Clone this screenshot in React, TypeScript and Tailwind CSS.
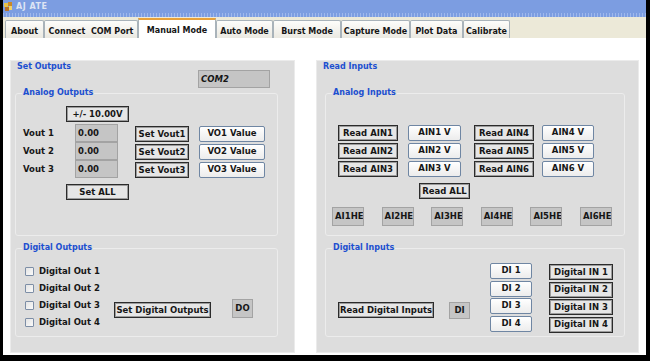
import type { ReactNode } from "react";

const tabs = [
  { label: "About", w: "w-[39px]" },
  { label: "Connect  COM Port", w: "w-[94px]" },
  { label: "Manual Mode", w: "w-[78px]", active: true },
  { label: "Auto Mode", w: "w-[57px]" },
  { label: "Burst Mode", w: "w-[68px]" },
  { label: "Capture Mode", w: "w-[69px]" },
  { label: "Plot Data", w: "w-[53px]" },
  { label: "Calibrate", w: "w-[47px]" },
];

function FlatBtn({ children, className = "" }: { children: ReactNode; className?: string }) {
  return (
    <div
      className={`h-[16px] flex items-center justify-center whitespace-pre border border-[#2b2b2b] bg-[#e6e6e6] shadow-[inset_0_0_0_1px_#9c9c9c] ${className}`}
    >
      {children}
    </div>
  );
}

function RoundBtn({ children, className = "" }: { children: ReactNode; className?: string }) {
  return (
    <div
      className={`h-[16px] flex items-end justify-center pb-[1px] whitespace-pre rounded-[2px] border border-[#6f86a3] bg-gradient-to-b from-[#ffffff] to-[#ececec] ${className}`}
    >
      {children}
    </div>
  );
}

function Field({ children, className = "" }: { children: ReactNode; className?: string }) {
  return (
    <div
      className={`flex items-center overflow-hidden whitespace-pre bg-[#c5c5c5] border border-[#a3a3a3] ${className}`}
    >
      {children}
    </div>
  );
}

function Group({
  title,
  className = "",
  children,
}: {
  title: string;
  className?: string;
  children: ReactNode;
}) {
  return (
    <fieldset className={`border border-[#ececec] rounded-[3px] ${className}`}>
      <legend className="ml-[6px] px-[1px] leading-[10px] text-[8px] text-[#1c4fd0]">{title}</legend>
      {children}
    </fieldset>
  );
}

export default function App() {
  return (
    <div className="w-[650px] h-[361px] bg-black pl-[3px] pr-[4px] pb-[6px] font-['DejaVu_Sans',sans-serif] font-bold text-[8.5px] text-[#161616]">
      <div className="h-full flex flex-col bg-white">
        {/* title bar */}
        <div className="h-[17px] flex flex-col bg-[#7c9de1]">
          <div className="h-[13px] flex items-center pl-[1px] gap-[3px]">
            <svg width="9" height="9" viewBox="0 0 9 9">
              <rect x="0" y="1" width="4" height="4" fill="#e8c34a" />
              <rect x="4" y="0" width="4" height="4" fill="#c98a2a" />
              <rect x="1" y="5" width="4" height="4" fill="#b7722a" />
              <rect x="5" y="4" width="3" height="4" fill="#f0d36a" />
            </svg>
            <span className="text-[8px] text-[#dde4f4] leading-none tracking-[0.5px]">AJ ATE</span>
          </div>
          <div className="h-[4px] bg-[repeating-linear-gradient(90deg,#9fb8ec_0px,#9fb8ec_1px,#7c9de1_1px,#7c9de1_3px)]" />
        </div>

        {/* tab strip */}
        <div className="h-[21px] flex items-end pl-[2px] bg-[#ece9d8]">
          {tabs.map((t) =>
            t.active ? (
              <div
                key={t.label}
                className={`${t.w} h-[20px] flex justify-center pt-[5px] whitespace-pre text-[8px] bg-white border-t-2 border-[#e7a13a] border-x border-x-[#a9b3ba]`}
              >
                {t.label}
              </div>
            ) : (
              <div
                key={t.label}
                className={`${t.w} h-[18px] flex justify-center pt-[5px] whitespace-pre text-[8px] bg-gradient-to-b from-[#fdfdfb] to-[#ebe9e1] border border-b-0 border-[#a9b3ba] rounded-t-[2px]`}
              >
                {t.label}
              </div>
            )
          )}
        </div>

        {/* content */}
        <div className="flex-1 flex pt-[22px] pl-[7px] gap-[21px]">
          {/* Set Outputs */}
          <div className="w-[285px] h-[293px] flex flex-col bg-[#dddddd] border border-[#ebebeb]">
            <div className="h-[27px] flex justify-between pl-[6px] pr-[24px]">
              <span className="mt-[1px] leading-[10px] text-[8px] text-[#1c4fd0]">Set Outputs</span>
              <Field className="mt-[9px] w-[72px] h-[18px] pl-[2px] italic">COM2</Field>
            </div>

            <Group title="Analog Outputs" className="ml-[4px] w-[263px] h-[148px]">
              <div className="flex flex-col">
                <FlatBtn className="ml-[50px] mt-[8px] w-[63px]">+/- 10.00V</FlatBtn>
                <div className="mt-[2px] flex items-start">
                  <div className="ml-[7px] w-[52px] flex flex-col">
                    {["Vout 1", "Vout 2", "Vout 3"].map((v) => (
                      <div key={v} className="h-[18px] flex items-center whitespace-pre">
                        {v}
                      </div>
                    ))}
                  </div>
                  <div className="w-[43px] flex flex-col">
                    {[0, 1, 2].map((i) => (
                      <Field key={i} className="h-[18px] pl-[2px]">
                        0.00
                      </Field>
                    ))}
                  </div>
                  <div className="ml-[17px] mt-[2px] flex flex-col gap-[2px]">
                    {[1, 2, 3].map((i) => (
                      <FlatBtn key={i} className="w-[54px]">{`Set Vout${i}`}</FlatBtn>
                    ))}
                  </div>
                  <div className="ml-[10px] mt-[2px] flex flex-col gap-[2px]">
                    {[1, 2, 3].map((i) => (
                      <RoundBtn key={i} className="w-[66px]">{`VO${i} Value`}</RoundBtn>
                    ))}
                  </div>
                </div>
                <FlatBtn className="ml-[50px] mt-[6px] w-[63px]">Set ALL</FlatBtn>
              </div>
            </Group>

            <Group title="Digital Outputs" className="mt-[7px] ml-[4px] w-[263px] h-[94px]">
              <div className="flex items-start">
                <div className="ml-[9px] mt-[10px] w-[89px] flex flex-col">
                  {[1, 2, 3, 4].map((i) => (
                    <div key={i} className="h-[17px] flex items-center gap-[5px] whitespace-pre">
                      <span className="w-[9px] h-[9px] rounded-[1px] border border-[#7d8ea6] bg-gradient-to-br from-[#e4e4e4] to-[#fafafa]" />
                      {`Digital Out ${i}`}
                    </div>
                  ))}
                </div>
                <FlatBtn className="mt-[49px] w-[97px]">Set Digital Outputs</FlatBtn>
                <Field className="ml-[21px] mt-[46px] w-[21px] h-[19px] justify-center">DO</Field>
              </div>
            </Group>
          </div>

          {/* Read Inputs */}
          <div className="w-[323px] h-[293px] flex flex-col bg-[#dddddd] border border-[#ebebeb]">
            <div className="h-[27px] flex pl-[6px]">
              <span className="mt-[1px] leading-[10px] text-[8px] text-[#1c4fd0]">Read Inputs</span>
            </div>

            <Group title="Analog Inputs" className="ml-[8px] w-[300px] h-[148px]">
              <div className="flex flex-col">
                <div className="mt-[27px] flex items-start">
                  <div className="ml-[12px] flex flex-col gap-[2px]">
                    {[1, 2, 3].map((i) => (
                      <FlatBtn key={i} className="w-[60px]">{`Read AIN${i}`}</FlatBtn>
                    ))}
                  </div>
                  <div className="ml-[10px] flex flex-col gap-[2px]">
                    {[1, 2, 3].map((i) => (
                      <RoundBtn key={i} className="w-[53px]">{`AIN${i} V`}</RoundBtn>
                    ))}
                  </div>
                  <div className="ml-[13px] flex flex-col gap-[2px]">
                    {[4, 5, 6].map((i) => (
                      <FlatBtn key={i} className="w-[60px]">{`Read AIN${i}`}</FlatBtn>
                    ))}
                  </div>
                  <div className="ml-[8px] flex flex-col gap-[2px]">
                    {[4, 5, 6].map((i) => (
                      <RoundBtn key={i} className="w-[52px]">{`AIN${i} V`}</RoundBtn>
                    ))}
                  </div>
                </div>
                <FlatBtn className="ml-[93px] mt-[6px] w-[51px]">Read ALL</FlatBtn>
                <div className="ml-[6px] mt-[8px] flex gap-[17.6px]">
                  {[1, 2, 3, 4, 5, 6].map((i) => (
                    <Field key={i} className="w-[32px] h-[19px] pl-[2px]">{`AI${i}HE`}</Field>
                  ))}
                </div>
              </div>
            </Group>

            <Group title="Digital Inputs" className="mt-[7px] ml-[8px] w-[300px] h-[94px]">
              <div className="flex items-start">
                <FlatBtn className="ml-[12px] mt-[49px] w-[96px]">Read Digital Inputs</FlatBtn>
                <Field className="ml-[15px] mt-[49px] w-[21px] h-[17px] justify-center">DI</Field>
                <div className="ml-[20px] mt-[10px] flex flex-col gap-[1.5px]">
                  {[1, 2, 3, 4].map((i) => (
                    <RoundBtn key={i} className="w-[42px]">{`DI ${i}`}</RoundBtn>
                  ))}
                </div>
                <div className="ml-[17px] mt-[11px] flex flex-col gap-[1.5px]">
                  {[1, 2, 3, 4].map((i) => (
                    <FlatBtn key={i} className="w-[64px]">{`Digital IN ${i}`}</FlatBtn>
                  ))}
                </div>
              </div>
            </Group>
          </div>
        </div>
      </div>
    </div>
  );
}
